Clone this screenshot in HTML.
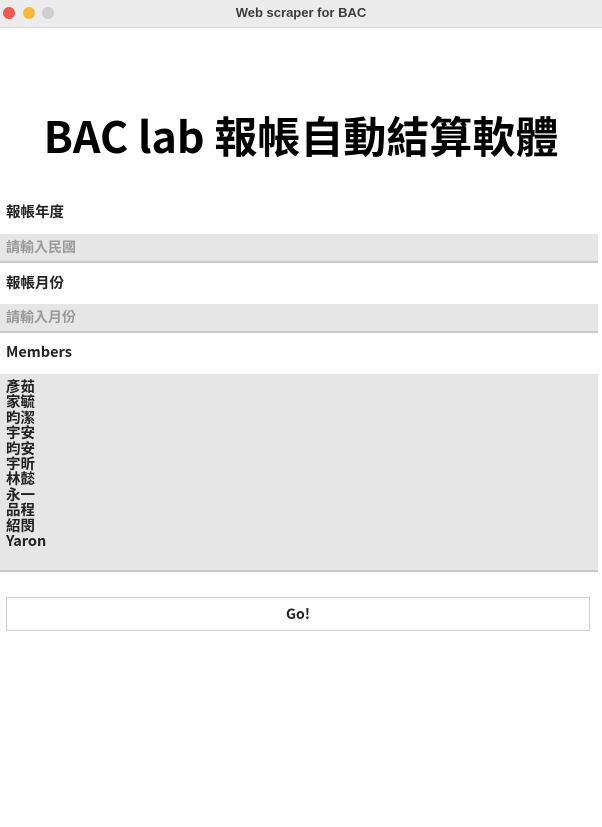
<html><head><style>
body{margin:0;width:602px;height:827px;background:#fff;font-family:"Noto Sans CJK TC","Liberation Sans",sans-serif;position:relative;overflow:hidden}
.tb{position:absolute;left:0;top:0;width:602px;height:27px;background:#ececec;border-bottom:1px solid #d6d6d6}
.dot{position:absolute;top:7px;width:12px;height:12px;border-radius:50%}
.tt{position:absolute;width:100%;top:5px;text-align:center;font-size:13px;font-weight:bold;color:#3c3c3c;font-family:"Liberation Sans",sans-serif}
h1{position:absolute;left:0;width:602px;top:105px;margin:0;text-align:center;font-size:43px;font-weight:bold;color:#000;line-height:60px}
.lb{position:absolute;left:6px;font-size:14.5px;font-weight:bold;color:#222;line-height:20px}
.in{position:absolute;left:0;width:598px;background:#e6e6e6;border-bottom:2px solid #c8c8c8;box-sizing:border-box;font-size:14px;font-weight:bold;color:#999;padding-left:6px}
.ta{color:#222;line-height:15.4px;padding-top:5px;font-size:14.5px}
.btn{position:absolute;left:6px;top:597px;width:584px;height:34px;border:1px solid #d0d0d0;box-sizing:border-box;text-align:center;line-height:32px;font-size:14px;font-weight:bold;color:#222}
</style></head><body>
<div class="tb"><div class="dot" style="left:3px;background:#ee5a52"></div><div class="dot" style="left:23px;background:#f5b93a"></div><div class="dot" style="left:42px;background:#cfcfcf"></div><div class="tt">Web scraper for BAC</div></div>
<h1>BAC lab 報帳自動結算軟體</h1>
<div class="lb" style="top:202px">報帳年度</div>
<div class="in" style="top:234px;height:29px;line-height:27px">請輸入民國</div>
<div class="lb" style="top:273px">報帳月份</div>
<div class="in" style="top:304px;height:29px;line-height:27px">請輸入月份</div>
<div class="lb" style="top:342px">Members</div>
<div class="in ta" style="top:374px;height:198px">彥茹<br>家毓<br>昀潔<br>宇安<br>昀安<br>宇昕<br>林懿<br>永一<br>品程<br>紹閔<br>Yaron</div>
<div class="btn">Go!</div>
</body></html>
